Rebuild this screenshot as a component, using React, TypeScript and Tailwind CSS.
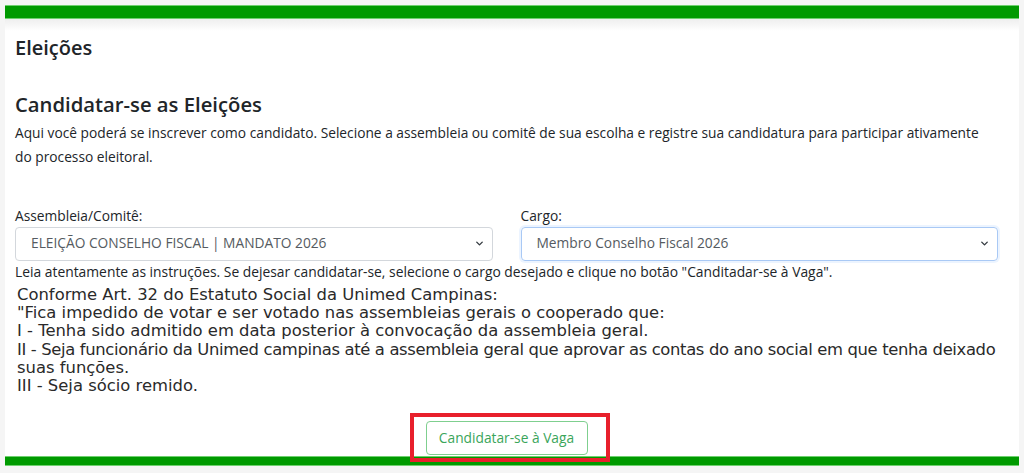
import { ChevronDown } from 'lucide-react';

const segoe = "font-['Open_Sans','Noto_Sans',sans-serif]";

export default function App() {
  return (
    <div className="min-h-screen bg-[#f5f5f5] px-[5px] pt-[5px] pb-[6px]">
      <div className={`bg-white text-[#212529] ${segoe}`}>
        {/* Top bar */}
        <div className="h-[14px] bg-[#009a00] border-y border-[#6fd06f]" />

        <div className="pl-[10px] pr-[21px] pt-[17px] bg-[linear-gradient(#eeeeee,#ffffff_12px)]">
          <h2 className="text-[20px] leading-[24px] font-semibold">Eleições</h2>

          <h3 className="mt-[32px] text-[20.25px] leading-[24px] font-semibold">Candidatar-se as Eleições</h3>
          <p className="mt-[5px] text-[13.75px] leading-[24px] pr-[10px]">
            Aqui você poderá se inscrever como candidato. Selecione a assembleia ou comitê de sua escolha e registre sua candidatura para participar ativamente do processo eleitoral.
          </p>

          {/* Form */}
          <div className="mt-[36px] grid grid-cols-2 gap-[28px]">
            <div>
              <label className="block text-[13.75px] leading-[21px]">Assembleia/Comitê:</label>
              <div className="mt-[0.5px] h-[34px] rounded-[4px] border border-[#d3d7dc] flex items-center justify-between pl-[15px] pr-[7px] text-[13.75px] text-[#555b61]">
                <span>ELEIÇÃO CONSELHO FISCAL | MANDATO 2026</span>
                <ChevronDown className="w-[11px] h-[11px] text-[#343a40]" strokeWidth={3} />
              </div>
            </div>
            <div>
              <label className="block text-[13.75px] leading-[21px]">Cargo:</label>
              <div className="mt-[0.5px] h-[34px] rounded-[4px] border border-[#a9c9f5] shadow-[0_0_0_2px_rgba(13,110,253,0.08)] flex items-center justify-between pl-[15px] pr-[7px] text-[13.75px] text-[#555b61]">
                <span>Membro Conselho Fiscal 2026</span>
                <ChevronDown className="w-[11px] h-[11px] text-[#343a40]" strokeWidth={3} />
              </div>
            </div>
          </div>
          <p className="text-[13.85px] leading-[21px]">
            Leia atentamente as instruções. Se dejesar candidatar-se, selecione o cargo desejado e clique no botão "Canditadar-se à Vaga".
          </p>

          {/* Legal text */}
          <div className="mt-[4.5px] pl-[2px] font-['DejaVu_Sans',sans-serif] text-[16.4px] leading-[18.2px] text-[#2a2a2a]">
            <div>Conforme Art. 32 do Estatuto Social da Unimed Campinas:</div>
            <div>"Fica impedido de votar e ser votado nas assembleias gerais o cooperado que:</div>
            <div>I - Tenha sido admitido em data posterior à convocação da assembleia geral.</div>
            <div className="whitespace-nowrap tracking-[-0.35px]">II - Seja funcionário da Unimed campinas até a assembleia geral que aprovar as contas do ano social em que tenha deixado</div>
            <div>suas funções.</div>
            <div>III - Seja sócio remido.</div>
          </div>

          <div className="mt-[26px] pb-[1px] flex justify-center">
            <div className="relative">
              <button className="h-[34px] w-[162px] rounded-[4px] border border-[#7fcf8f] text-[#3aa55a] text-[13.75px]">
                Candidatar-se à Vaga
              </button>
              <span className="absolute -left-[16px] -right-[22px] -top-[8px] -bottom-[7px] border-[4px] border-[#e8202c] z-10 pointer-events-none" />
            </div>
          </div>
        </div>

        {/* Bottom bar */}
        <div className="h-[10px] bg-[#009a00] border-y border-[#6fd06f]" />
      </div>
    </div>
  );
}
